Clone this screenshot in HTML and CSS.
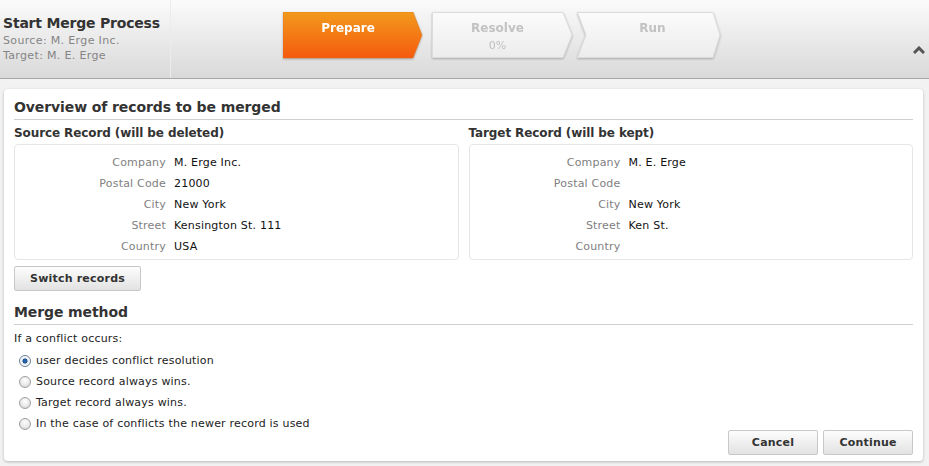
FILE: index.html
```html
<!DOCTYPE html>
<html>
<head>
<meta charset="utf-8">
<link rel="stylesheet" href="styles.css">
</head>
<body>
<div class="header">
  <div class="title-block">
    <div class="title">Start Merge Process</div>
    <div class="sub">Source: M. Erge Inc.</div>
    <div class="sub">Target: M. E. Erge</div>
  </div>
  <div class="steps">
    <div class="step step-prepare">
      <svg class="step-bg" width="140" height="47" viewBox="0 0 140 47">
        <defs>
          <linearGradient id="gOr" x1="0" y1="0" x2="0" y2="1">
            <stop offset="0" stop-color="#f29a1c"/>
            <stop offset="1" stop-color="#f55a0f"/>
          </linearGradient>
        </defs>
        <polygon points="0,0 130,0 139,23 130,46 0,46" fill="url(#gOr)" stroke="#e07020" stroke-width="0.5"/>
      </svg>
      <span class="step-label">Prepare</span>
    </div>
    <div class="step step-resolve">
      <svg class="step-bg" width="141" height="47" viewBox="0 0 141 47">
        <defs>
          <linearGradient id="gGr" x1="0" y1="0" x2="0" y2="1">
            <stop offset="0" stop-color="#fbfbfb"/>
            <stop offset="1" stop-color="#ececec"/>
          </linearGradient>
        </defs>
        <polygon points="0.5,0.5 131,0.5 140,23 131,45.5 0.5,45.5" fill="url(#gGr)" stroke="#dcdcdc" stroke-width="1"/>
      </svg>
      <span class="step-label">Resolve</span>
      <span class="step-pct">0%</span>
    </div>
    <div class="step step-run">
      <svg class="step-bg" width="145" height="47" viewBox="0 0 145 47">
        <polygon points="0.5,0.5 136,0.5 143,23 136,45.5 0.5,45.5 9,23" fill="url(#gGr)" stroke="#dcdcdc" stroke-width="1"/>
      </svg>
      <span class="step-label">Run</span>
    </div>
  </div>
  <div class="collapse">
    <svg width="12" height="8" viewBox="0 0 12 8"><path d="M1 7 L6 2 L11 7" fill="none" stroke="#555" stroke-width="3" stroke-linejoin="miter"/></svg>
  </div>
</div>

<div class="panel">
  <h2 class="section-title">Overview of records to be merged</h2>
  <div class="records">
    <div class="record">
      <h3 class="record-title">Source Record (will be deleted)</h3>
      <div class="record-box">
        <div class="row"><span class="lbl">Company</span><span class="val">M. Erge Inc.</span></div>
        <div class="row"><span class="lbl">Postal Code</span><span class="val">21000</span></div>
        <div class="row"><span class="lbl">City</span><span class="val">New York</span></div>
        <div class="row"><span class="lbl">Street</span><span class="val">Kensington St. 111</span></div>
        <div class="row"><span class="lbl">Country</span><span class="val">USA</span></div>
      </div>
    </div>
    <div class="record">
      <h3 class="record-title">Target Record (will be kept)</h3>
      <div class="record-box">
        <div class="row"><span class="lbl">Company</span><span class="val">M. E. Erge</span></div>
        <div class="row"><span class="lbl">Postal Code</span><span class="val"></span></div>
        <div class="row"><span class="lbl">City</span><span class="val">New York</span></div>
        <div class="row"><span class="lbl">Street</span><span class="val">Ken St.</span></div>
        <div class="row"><span class="lbl">Country</span><span class="val"></span></div>
      </div>
    </div>
  </div>
  <button class="btn btn-switch">Switch records</button>

  <h2 class="section-title section-merge">Merge method</h2>
  <div class="hint">If a conflict occurs:</div>
  <div class="radios">
    <label class="radio"><input type="radio" name="m" checked><span>user decides conflict resolution</span></label>
    <label class="radio"><input type="radio" name="m"><span>Source record always wins.</span></label>
    <label class="radio"><input type="radio" name="m"><span>Target record always wins.</span></label>
    <label class="radio"><input type="radio" name="m"><span>In the case of conflicts the newer record is used</span></label>
  </div>
  <div class="actions">
    <button class="btn btn-action">Cancel</button>
    <button class="btn btn-action">Continue</button>
  </div>
</div>
</body>
</html>
```

FILE: styles.css
```css
* { box-sizing: border-box; }
html, body { margin: 0; padding: 0; }
body {
  width: 929px;
  height: 466px;
  overflow: hidden;
  background: #f2f2f2;
  font-family: "DejaVu Sans", Verdana, sans-serif;
  font-size: 11px;
  letter-spacing: 0.2px;
  color: #222;
}
.header {
  height: 79px;
  display: flex;
  background: linear-gradient(#fbfbfb, #d9d9d9);
  border-bottom: 1px solid #a9a9a9;
  position: relative;
}
.title-block {
  width: 171px;
  padding: 15px 0 0 3px;
  border-right: 1px solid #ececec;
}
.title {
  font-weight: bold;
  font-size: 14px;
  color: #333;
  line-height: 17px;
  letter-spacing: -0.2px;
}
.sub {
  color: #858585;
  font-size: 11px;
  line-height: 15px;
  letter-spacing: 0.35px;
  margin-top: 1px;
}
.sub + .sub { margin-top: 0; }
.steps {
  display: flex;
  padding: 12px 0 0 112px;
  flex: 1;
}
.step {
  position: relative;
  height: 47px;
  display: flex;
  flex-direction: column;
  align-items: center;
  filter: drop-shadow(0 1px 1px rgba(0,0,0,0.25));
  letter-spacing: 0;
}
.step-bg { position: absolute; left: 0; top: 0; }
.step-label {
  position: relative;
  font-weight: bold;
  font-size: 12px;
  line-height: 14px;
  margin-top: 9px;
  color: #c2c2c2;
}
.step-pct {
  position: relative;
  color: #c0c0c0;
  font-size: 11px;
  line-height: 14px;
  margin-top: 4px;
}
.step-prepare { width: 140px; padding-right: 10px; }
.step-prepare .step-label { color: #fff; }
.step-resolve { width: 141px; margin-left: 9px; padding-right: 10px; }
.step-run { width: 145px; margin-left: 4px; padding-left: 6px; }
.collapse {
  position: absolute;
  right: 4px;
  top: 46px;
}
.collapse svg { display: block; }

.panel {
  margin: 10px 6px 0 4px;
  height: 372px;
  background: #fff;
  border-radius: 4px;
  box-shadow: 0 1px 3px rgba(0,0,0,0.25);
  padding: 9px 10px 0 10px;
  display: flex;
  flex-direction: column;
}
.section-title {
  margin: 0;
  font-size: 14px;
  line-height: 18px;
  font-weight: bold;
  color: #333;
  letter-spacing: -0.1px;
  padding-bottom: 3px;
  border-bottom: 1px solid #cfcfcf;
}
.records {
  display: flex;
  gap: 10px;
}
.record { flex: 1; }
.record-title {
  margin: 5px 0 3px 0;
  font-size: 12px;
  line-height: 16px;
  font-weight: bold;
  color: #333;
  letter-spacing: -0.1px;
}
.record-box {
  border: 1px solid #e6e6e6;
  border-radius: 4px;
  padding: 7px 0 4px 0;
  height: 116px;
}
.row {
  display: flex;
  line-height: 21px;
  height: 21px;
}
.lbl {
  width: 159px;
  text-align: right;
  color: #808080;
  padding-right: 8px;
}
.val { color: #111; }

.btn {
  font-family: "DejaVu Sans", Verdana, sans-serif;
  font-weight: bold;
  font-size: 11px;
  letter-spacing: 0.2px;
  color: #333;
  background: linear-gradient(#fdfdfd, #e2e2e2);
  border: 1px solid #c8c8c8;
  border-radius: 2px;
  height: 25px;
  padding: 0;
}
.btn-switch {
  width: 127px;
  margin-top: 6px;
  align-self: flex-start;
}
.section-merge { margin-top: 12px; }
.hint {
  margin-top: 6px;
  line-height: 16px;
  color: #222;
}
.radios {
  display: flex;
  flex-direction: column;
  margin-top: 3px;
}
.radio {
  display: flex;
  align-items: center;
  height: 21px;
  padding-left: 5px;
}
.radio input {
  -webkit-appearance: none;
  appearance: none;
  width: 12px;
  height: 12px;
  margin: 0 5px 0 0;
  border-radius: 50%;
  border: 1px solid #a0a0a0;
  background: radial-gradient(circle at 50% 35%, #ffffff 0%, #e6e6e6 60%, #c8c8c8 100%);
}
.radio input:checked {
  border-color: #6a7f95;
  background: radial-gradient(circle at 50% 50%, #2a73c2 0%, #1a4f8e 30%, #dfe6ee 40%, #ffffff 70%, #cfd6de 100%);
}
.actions {
  display: flex;
  justify-content: flex-end;
  gap: 5px;
  margin-top: -4px;
}
.btn-action { width: 90px; }
```
